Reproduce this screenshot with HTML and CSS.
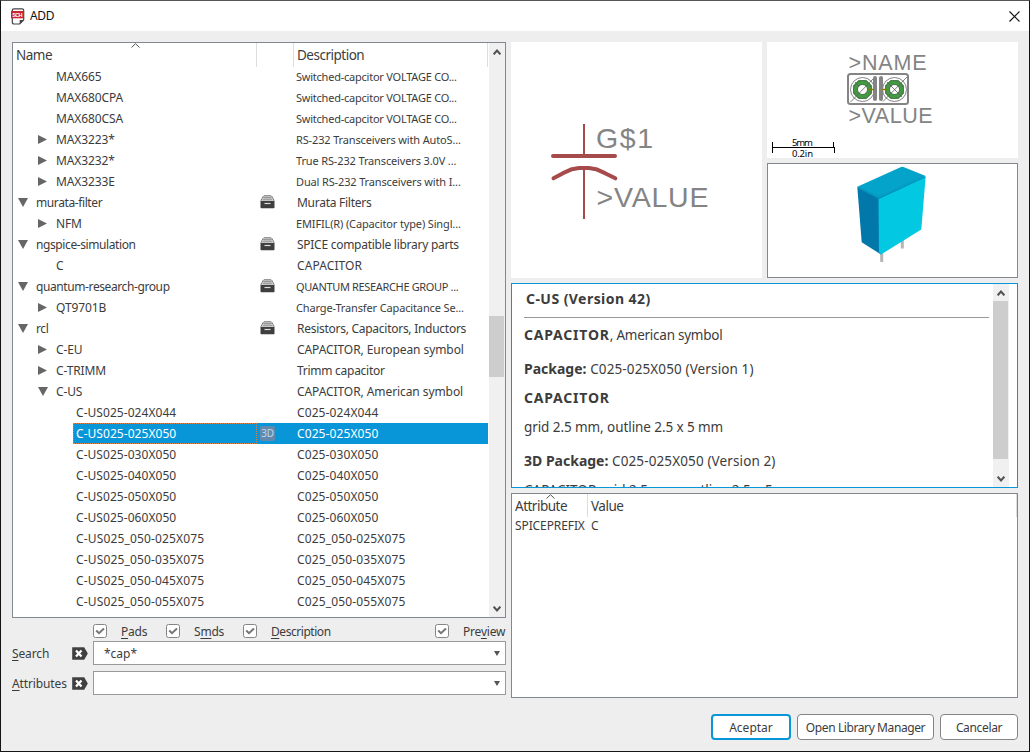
FILE: index.html
```html
<!DOCTYPE html>
<html lang="en">
<head>
<meta charset="utf-8">
<title>ADD</title>
<link rel="stylesheet" href="styles.css">
</head>
<body>
<svg class="defs" aria-hidden="true">
  <symbol id="drawer" viewBox="0 0 15 14">
    <path d="M4 .8h7M3.200 2.800h8.600" stroke="#777" stroke-width="1.200" fill="none"/>
    <path d="M3.500 .8 .9 5.500M11.500 .8 14.100 5.500" stroke="#777" fill="none"/>
    <path d="M2.400 4.600h10.200" stroke="#999" fill="none"/>
    <path d="M.5 5.800h14v6.700q0 .8-.8.8H1.300q-.8 0-.8-.8z" fill="#3f3f3f"/>
    <path d="M4.500 8.500h6" stroke="#ddd" stroke-width="1.200"/>
  </symbol>
  <symbol id="clear" viewBox="0 0 16 13">
    <path d="M.2 .3h12l3.600 6.200-3.600 6.200H.200z" fill="#404040"/>
    <path d="M4 3.500l5.500 6M9.500 3.500 4 9.500" stroke="#fff" stroke-width="2.300"/>
  </symbol>
  <symbol id="check" viewBox="0 0 14 14">
    <rect x=".5" y=".5" width="13" height="13" rx="2" fill="#fff" stroke="#858585"/>
    <path d="M3.200 6.500 6 9.200 11 4.500" stroke="#777" stroke-width="2" fill="none"/>
  </symbol>
  <symbol id="up" viewBox="0 0 8 6"><path d="M.6 5.400 4 1.600 7.400 5.400" stroke="#505050" stroke-width="2" fill="none"/></symbol>
  <symbol id="down" viewBox="0 0 8 6"><path d="M.6 .6 4 4.400 7.400 .6" stroke="#505050" stroke-width="2" fill="none"/></symbol>
  <symbol id="sort" viewBox="0 0 9 5"><path d="M.5 4.500 4.500 .7 8.500 4.500" stroke="#555" fill="none"/></symbol>
</svg>
<div class="window">
  <header class="titlebar">
    <svg class="app-icon" viewBox="0 0 14 17">
      <path d="M3 .8h8q1.700 0 1.700 1.700v9.500l-4 4H3q-1.700 0-1.700-1.700V2.500Q1.300.8 3 .8z" fill="#fff" stroke="#444" stroke-width="1.200"/>
      <path d="M8.700 16v-3.900h4z" fill="#444"/>
      <rect x="0" y="3" width="12.500" height="7.300" fill="#c8252d"/>
      <text x="1.200" y="8.800" class="app-icon-text" textLength="10.200">SCH</text>
    </svg>
    <h1 class="title">ADD</h1>
    <svg class="close" viewBox="0 0 11 11"><path d="M.5 .5l10 10M10.500 .5l-10 10" stroke="#111" stroke-width="1.100"/></svg>
  </header>
  <main class="content">
    <section class="left">
      <div class="tree">
        <div class="table">
          <div class="thead">
            <div class="th th-name">Name<svg class="sort"><use href="#sort"/></svg></div>
            <div class="th"></div>
            <div class="th th-desc">Description</div>
          </div>
          <div class="row l2"><span class="name">MAX665</span><i></i><span class="desc small tight">Switched-capcitor VOLTAGE CO...</span></div>
          <div class="row l2"><span class="name">MAX680CPA</span><i></i><span class="desc small tight">Switched-capcitor VOLTAGE CO...</span></div>
          <div class="row l2"><span class="name">MAX680CSA</span><i></i><span class="desc small tight">Switched-capcitor VOLTAGE CO...</span></div>
          <div class="row l2"><span class="name closed">MAX3223*</span><i></i><span class="desc small">RS-232 Transceivers with AutoS...</span></div>
          <div class="row l2"><span class="name closed">MAX3232*</span><i></i><span class="desc small">True RS-232 Transceivers 3.0V ...</span></div>
          <div class="row l2"><span class="name closed">MAX3233E</span><i></i><span class="desc small">Dual RS-232 Transceivers with I...</span></div>
          <div class="row l1"><span class="name open">murata-filter</span><i><svg class="drawer"><use href="#drawer"/></svg></i><span class="desc prose">Murata Filters</span></div>
          <div class="row l2"><span class="name closed">NFM</span><i></i><span class="desc small">EMIFIL(R) (Capacitor type) Singl...</span></div>
          <div class="row l1"><span class="name open">ngspice-simulation</span><i><svg class="drawer"><use href="#drawer"/></svg></i><span class="desc prose">SPICE compatible library parts</span></div>
          <div class="row l2"><span class="name">C</span><i></i><span class="desc">CAPACITOR</span></div>
          <div class="row l1"><span class="name open">quantum-research-group</span><i><svg class="drawer"><use href="#drawer"/></svg></i><span class="desc small caps">QUANTUM RESEARCHE GROUP ...</span></div>
          <div class="row l2"><span class="name closed">QT9701B</span><i></i><span class="desc small">Charge-Transfer Capacitance Se...</span></div>
          <div class="row l1"><span class="name open">rcl</span><i><svg class="drawer"><use href="#drawer"/></svg></i><span class="desc prose">Resistors, Capacitors, Inductors</span></div>
          <div class="row l2"><span class="name closed">C-EU</span><i></i><span class="desc mixed">CAPACITOR, European symbol</span></div>
          <div class="row l2"><span class="name closed">C-TRIMM</span><i></i><span class="desc prose">Trimm capacitor</span></div>
          <div class="row l2"><span class="name open">C-US</span><i></i><span class="desc mixed">CAPACITOR, American symbol</span></div>
          <div class="row l3"><span class="name">C-US025-024X044</span><i></i><span class="desc">C025-024X044</span></div>
          <div class="row l3 selected"><span class="name">C-US025-025X050</span><i><b class="badge">3D</b></i><span class="desc">C025-025X050</span></div>
          <div class="row l3"><span class="name">C-US025-030X050</span><i></i><span class="desc">C025-030X050</span></div>
          <div class="row l3"><span class="name">C-US025-040X050</span><i></i><span class="desc">C025-040X050</span></div>
          <div class="row l3"><span class="name">C-US025-050X050</span><i></i><span class="desc">C025-050X050</span></div>
          <div class="row l3"><span class="name">C-US025-060X050</span><i></i><span class="desc">C025-060X050</span></div>
          <div class="row l3 long"><span class="name">C-US025_050-025X075</span><i></i><span class="desc">C025_050-025X075</span></div>
          <div class="row l3 long"><span class="name">C-US025_050-035X075</span><i></i><span class="desc">C025_050-035X075</span></div>
          <div class="row l3 long"><span class="name">C-US025_050-045X075</span><i></i><span class="desc">C025_050-045X075</span></div>
          <div class="row l3 long"><span class="name">C-US025_050-055X075</span><i></i><span class="desc">C025_050-055X075</span></div>
        </div>
        <div class="scrollbar tree-scroll"><svg class="chev"><use href="#up"/></svg><div class="thumb"></div><svg class="chev"><use href="#down"/></svg></div>
      </div>
      <div class="checks">
        <label class="check pads"><svg><use href="#check"/></svg><span><u>P</u>ads</span></label>
        <label class="check smds"><svg><use href="#check"/></svg><span>S<u>m</u>ds</span></label>
        <label class="check descr"><svg><use href="#check"/></svg><span><u>D</u>escription</span></label>
        <label class="check preview"><svg><use href="#check"/></svg><span>Pre<u>v</u>iew</span></label>
      </div>
      <div class="field"><span class="label"><u>S</u>earch</span><svg class="clear"><use href="#clear"/></svg><div class="combo">*cap*</div></div>
      <div class="field"><span class="label"><u>A</u>ttributes</span><svg class="clear"><use href="#clear"/></svg><div class="combo"></div></div>
    </section>
    <section class="right">
      <div class="previews">
        <div class="symbol">
          <svg viewBox="0 0 251 236">
            <g fill="none" stroke="#a54b4b">
              <path d="M73 82v32M73 126v51" stroke-width="2"/>
              <path d="M42 114h62M42.500 136.300 52 131.200 61 127.200 68 126h10l7 1.200 9 4 10.300 5.100" stroke-width="4" stroke-linecap="round" stroke-linejoin="round"/>
            </g>
            <g class="cad-text" font-size="28.500"><text x="85" y="106" textLength="57">G$1</text><text x="85.500" y="165" textLength="112">&gt;VALUE</text></g>
          </svg>
        </div>
        <div class="package">
          <svg viewBox="0 0 251 116">
            <g class="cad-text" font-size="21.500"><text x="81.500" y="28" textLength="78">&gt;NAME</text><text x="81.500" y="81" textLength="84">&gt;VALUE</text></g>
            <rect x="81" y="32" width="60" height="30" rx="2.500" fill="none" stroke="#848484" stroke-width="2"/>
            <g fill="none" stroke="#848484">
              <circle cx="95.500" cy="47.500" r="12"/><circle cx="127.500" cy="47.500" r="12"/>
            </g>
            <g fill="#fff" stroke="#3e9e3e" stroke-width="5">
              <path d="M92.600 40.500h5.800l4.100 4.100v5.800l-4.100 4.100h-5.800l-4.100-4.100v-5.800z"/>
              <path d="M124.600 40.500h5.800l4.100 4.100v5.800l-4.100 4.100h-5.800l-4.100-4.100v-5.800z"/>
            </g>
            <g fill="none" stroke="#606060" stroke-width=".8">
              <circle cx="95.500" cy="47.500" r="9"/><circle cx="127.500" cy="47.500" r="9"/>
              <circle cx="95.500" cy="47.500" r="5"/><circle cx="127.500" cy="47.500" r="5"/>
              <path d="M83.500 60 108 35M116 59.500 140 35M88 40l4 4M120 40l15 15"/>
            </g>
            <path d="M108 36v21M114 36v21" stroke="#848484" stroke-width="4" stroke-linecap="round"/>
            <path d="M101 47.500h6M115 47.500h6" stroke="#808000" stroke-width="1.500"/>
            <path d="M5.500 100v11M5 105.500h62.500M66.500 100v5.500M67.500 105v6" stroke="#000" fill="none"/>
            <g class="scale-text"><text x="25" y="104" textLength="21">5mm</text><text x="25" y="114.500" textLength="21">0.2in</text></g>
          </svg>
        </div>
        <div class="model">
          <svg viewBox="0 0 249 113">
            <path d="M113.700 88v10M134.300 76v8.500" stroke="#b5b5b5" stroke-width="3"/>
            <path d="M132.500 3.200q1.800-.8 3.600 0L157.700 12 111.500 36 89.300 22.700z" fill="#04a3c9"/>
            <path d="M89.300 22.700 111 35 113 90.500 93.700 78.300z" fill="#0278aa"/>
            <path d="M110.500 34.500 157.700 12 153.300 65.500 113 90.500 111 88z" fill="#02c8e2"/>
            <path d="M90 23.700 111 34.300 157 13" stroke="#0290b8" stroke-width="1.200" fill="none"/>
            <path d="M92 23.500 111 32.500 155 12" stroke="#069abf" stroke-width=".7" fill="none"/>
          </svg>
        </div>
      </div>
      <article class="info">
        <div class="info-text">
          <h2 class="info-title">C-US (Version 42)</h2>
          <p class="p1"><b class="cap">CAPACITOR</b>, American symbol</p>
          <p class="p2"><b>Package:</b> C025-025X050 (Version 1)</p>
          <p class="p3"><b class="cap">CAPACITOR</b></p>
          <p class="p4">grid 2.5 mm, outline 2.5 x 5 mm</p>
          <p class="p5"><b>3D Package:</b> C025-025X050 (Version 2)</p>
          <p class="p6">CAPACITOR grid 2.5 mm, outline 2.5 x 5</p>
        </div>
        <div class="scrollbar info-scroll"><svg class="chev"><use href="#up"/></svg><div class="thumb"></div><svg class="chev"><use href="#down"/></svg></div>
      </article>
      <div class="attrs">
        <div class="attr-head"><div class="th attr-th">Attribute<svg class="sort"><use href="#sort"/></svg></div><div class="th value-th">Value</div></div>
        <div class="attr-row"><span class="attr-name">SPICEPREFIX</span><span>C</span></div>
      </div>
      <div class="buttons">
        <button class="btn primary">Aceptar</button>
        <button class="btn wide">Open Library Manager</button>
        <button class="btn cancel">Cancelar</button>
      </div>
    </section>
  </main>
</div>
</body>
</html>
```
FILE: styles.css
```css
* { box-sizing: border-box; }
body { margin: 0; font: 12px/21px "Noto Sans", "Open Sans", sans-serif; color: #3c3c3c; }
.defs { display: none; }
svg { display: block; }
u { text-decoration: underline; text-underline-offset: 2px; text-decoration-skip-ink: none; }
.window { width: 1030px; height: 752px; display: flex; flex-direction: column; background: #eee; border: 1px solid #141414; border-top-color: #555; overflow: hidden; }
.titlebar { height: 30px; flex: none; background: #fff; display: flex; align-items: center; padding: 0 9px 0 10px; }
.app-icon { width: 14px; height: 17px; margin-right: 5px; }
.app-icon-text { font: bold 5.5px "Liberation Sans", sans-serif; fill: #fff; }
.title { margin: 0; font-size: 12px; font-weight: 400; color: #111; flex: 1; line-height: 19px; padding-bottom: 2px; letter-spacing: -.3px; }
.close { width: 11px; height: 11px; }
.content { display: flex; gap: 5px; padding: 11px; height: 720px; }
.left { width: 494px; display: flex; flex-direction: column; }
.tree { height: 576px; border: 1px solid #828790; background: #fff; display: flex; flex: none; }
.table { width: 476px; overflow: hidden; }
.thead { display: grid; grid-template-columns: 244px 37px 1fr; height: 23px; }
.th { position: relative; border-right: 1px solid #ddd; font-size: 13.5px; line-height: 24px; padding-left: 3px; letter-spacing: -.5px; }
.th-desc { margin-right: 1px; }
.sort { position: absolute; top: 0; left: 118px; width: 9px; height: 5px; }
.row { display: grid; grid-template-columns: 244px 37px 1fr; height: 21px; white-space: nowrap; }
.row i { display: flex; align-items: center; padding-left: 3px; font-style: normal; }
.name { position: relative; }
.l1 .name { padding-left: 23px; letter-spacing: -.4px; }
.l2 .name { padding-left: 43px; letter-spacing: -.12px; }
.l3 .name { padding-left: 63px; letter-spacing: .05px; }
.long .name, .row.long .desc { letter-spacing: .15px; }
.name::before { position: absolute; background: #666; }
.closed::before { content: ""; width: 9px; height: 9px; top: 6px; left: 25px; clip-path: polygon(0 0, 100% 50%, 0 100%); }
.open::before { content: ""; width: 10px; height: 9px; top: 6px; left: 5px; clip-path: polygon(0 0, 100% 0, 50% 100%); }
.l2 .open::before { left: 25px; }
.desc { padding-left: 3px; letter-spacing: .1px; }
.prose { letter-spacing: -.27px; }
.mixed { letter-spacing: -.08px; }
.small { font-size: 11px; padding-left: 2px; letter-spacing: -.14px; }
.tight { letter-spacing: -.23px; }
.caps { letter-spacing: -.35px; }
.drawer { width: 15px; height: 14px; margin-bottom: 1px; }
.selected { color: #fff; background: linear-gradient(#0996d9, #0996d9) 60px 0 / 415px 21px no-repeat; }
.l3.selected .name { margin-left: 60px; padding-left: 3px; outline: 1px dotted #d8834c; outline-offset: -1px; }
.badge { width: 15px; height: 15px; border-radius: 2px; background: #6389ad; color: #b9daf2; font: 10px/15px "Noto Sans", sans-serif; text-align: center; letter-spacing: -.3px; }
.scrollbar { width: 16px; background: #f0f0f0; display: flex; flex-direction: column; align-items: center; }
.chev { width: 8px; height: 6px; flex: none; }
.thumb { background: #cdcdcd; width: 15px; align-self: flex-start; flex: none; }
.tree-scroll { padding: 6px 0 5px; }
.tree-scroll .thumb { height: 61px; margin: 261px 0 229px; }
.checks { display: flex; height: 23px; padding: 6px 0 0 81px; }
.check { display: flex; height: 14px; line-height: 15px; letter-spacing: -.2px; }
.check svg { width: 14px; height: 14px; margin-right: 14px; flex: none; }
.pads { width: 73px; }
.smds { width: 77px; }
.descr { width: 192px; flex: none; letter-spacing: -.45px; }
.field { display: flex; align-items: center; height: 24px; margin-bottom: 6px; }
.label { width: 60px; white-space: nowrap; letter-spacing: -.12px; }
.clear { width: 16px; height: 13px; margin-right: 5px; }
.combo { position: relative; flex: 1; height: 24px; background: #fff; border: 1px solid #999; padding-left: 10px; line-height: 23px; }
.combo::after { content: ""; position: absolute; right: 5px; top: 9px; width: 6px; height: 5px; background: #555; clip-path: polygon(0 0, 100% 0, 50% 100%); }
.right { width: 507px; display: flex; flex-direction: column; gap: 5px; }
.previews { display: grid; grid-template: 116px 115px / 251px 251px; gap: 5px; height: 236px; flex: none; }
.symbol { grid-row: 1 / 3; background: #fff; }
.package { background: #fff; }
.model { background: #fff; border: 1px solid #828790; }
.cad-text { font-family: "Liberation Sans", Arial, sans-serif; fill: #848484; }
.scale-text { font: 9.5px "Noto Sans", sans-serif; fill: #000; }
.info { height: 205px; flex: none; background: #fff; border: 1px solid #0996d9; display: flex; font-size: 13.5px; line-height: 18px; }
.info-text { width: 481px; padding: 6px 4px 0 12px; overflow: hidden; white-space: nowrap; }
.info-title { margin: 0; padding: 0 0 9px 2px; font-size: 14px; line-height: 18px; letter-spacing: .45px; border-bottom: 1px solid #999; }
.info p { margin: 0; }
.info b { font-size: 14px; letter-spacing: 0; line-height: 17px; }
.info .cap { letter-spacing: .8px; }
.info .p1 { margin-top: 8px; letter-spacing: -.25px; }
.info .p2 { margin-top: 16px; letter-spacing: .12px; }
.info .p3 { margin-top: 11px; }
.info .p4 { margin-top: 11px; letter-spacing: -.08px; }
.info .p5 { margin-top: 16px; letter-spacing: .12px; }
.info .p6 { margin-top: 11px; }
.info-scroll { padding: 6px 0 5px; }
.info-scroll .thumb { height: 158px; margin: 5px 0 17px; }
.attrs { height: 205px; flex: none; background: #fff; border: 1px solid #828790; }
.attr-head { display: flex; height: 23px; }
.attr-th { width: 76px; }
.value-th { flex: 1; }
.attr-th .sort { left: 34px; }
.attr-row { display: flex; line-height: 18px; }
.attr-name { width: 79px; padding-left: 3px; letter-spacing: -.1px; }
.buttons { display: flex; justify-content: flex-end; gap: 6px; padding-top: 11px; }
.btn { width: 78px; height: 26px; padding: 1px 0 0; border: 1px solid #858585; border-radius: 4px; background: #fff; color: #3c3c3c; font: 12px/23px "Noto Sans", sans-serif; }
.primary { width: 80px; border: 2px solid #0996d9; line-height: 21px; }
.wide { width: 137px; letter-spacing: -.4px; }
.cancel { letter-spacing: -.35px; }
```
